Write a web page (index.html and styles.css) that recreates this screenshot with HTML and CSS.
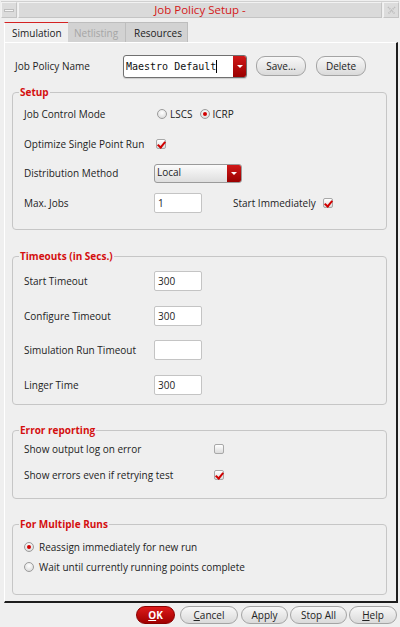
FILE: index.html
```html
<!DOCTYPE html>
<html>
<head>
<meta charset="utf-8">
<link rel="stylesheet" href="styles.css">
</head>
<body>
<div class="window">
  <div class="titlebar">
    <div class="tb-btn tb-min"><span class="min-bar"></span></div>
    <div class="tb-title">Job Policy Setup -</div>
    <div class="tb-btn tb-close">
      <svg width="9" height="9" viewBox="0 0 9 9"><path d="M1 1l7 7M8 1L1 8" stroke="#bdbdbd" stroke-width="1.6" stroke-dasharray="1.2 0.8"/></svg>
    </div>
  </div>

  <div class="tabs">
    <div class="tab active">Simulation</div>
    <div class="tab disabled">Netlisting</div>
    <div class="tab">Resources</div>
  </div>

  <div class="panel">
    <div class="name-row">
      <span class="lbl name-lbl">Job Policy Name</span>
      <div class="combo">
        <span class="combo-text">Maestro Default<span class="caret"></span></span>
        <span class="combo-arrow"><span class="tri"></span></span>
      </div>
      <button class="btn save">Save...</button>
      <button class="btn del">Delete</button>
    </div>

    <fieldset class="group setup">
      <legend>Setup</legend>
      <div class="grid">
        <span class="lbl">Job Control Mode</span>
        <div class="ctrl radios">
          <span class="radio"></span><span class="rlbl">LSCS</span>
          <span class="radio on"></span><span class="rlbl">ICRP</span>
        </div>
        <span class="lbl">Optimize Single Point Run</span>
        <div class="ctrl"><span class="check on"></span></div>
        <span class="lbl">Distribution Method</span>
        <div class="ctrl">
          <div class="select"><span class="select-text">Local</span><span class="select-arrow"><span class="tri"></span></span></div>
        </div>
        <span class="lbl">Max. Jobs</span>
        <div class="ctrl">
          <span class="input">1</span>
          <span class="lbl start-lbl">Start Immediately</span>
          <span class="check on start-check"></span>
        </div>
      </div>
    </fieldset>

    <fieldset class="group timeouts">
      <legend>Timeouts (in Secs.)</legend>
      <div class="grid tgrid">
        <span class="lbl">Start Timeout</span>
        <div class="ctrl"><span class="input">300</span></div>
        <span class="lbl">Configure Timeout</span>
        <div class="ctrl"><span class="input">300</span></div>
        <span class="lbl">Simulation Run Timeout</span>
        <div class="ctrl"><span class="input"></span></div>
        <span class="lbl">Linger Time</span>
        <div class="ctrl"><span class="input">300</span></div>
      </div>
    </fieldset>

    <fieldset class="group errors">
      <legend>Error reporting</legend>
      <div class="grid egrid">
        <span class="lbl">Show output log on error</span>
        <div class="ctrl"><span class="check"></span></div>
        <span class="lbl">Show errors even if retrying test</span>
        <div class="ctrl"><span class="check on"></span></div>
      </div>
    </fieldset>

    <fieldset class="group multi">
      <legend>For Multiple Runs</legend>
      <div class="mrow"><span class="radio on"></span><span class="lbl">Reassign immediately for new run</span></div>
      <div class="mrow"><span class="radio"></span><span class="lbl">Wait until currently running points complete</span></div>
    </fieldset>
  </div>

  <div class="footer">
    <button class="btn fbtn ok"><u>O</u>K</button>
    <button class="btn fbtn cancel"><u>C</u>ancel</button>
    <button class="btn fbtn apply">Apply</button>
    <button class="btn fbtn stop">Stop All</button>
    <button class="btn fbtn help"><u>H</u>elp</button>
  </div>
</div>
</body>
</html>
```

FILE: styles.css
```css
* { box-sizing: border-box; }
html, body {
  margin: 0;
  padding: 0;
  background: #efefef;
}
body {
  font-family: "Open Sans", "Noto Sans", sans-serif;
  font-size: 10px;
  color: #232323;
  width: 400px;
  height: 627px;
  overflow: hidden;
}
.window {
  width: 400px;
  height: 627px;
  display: flex;
  flex-direction: column;
  padding: 1px 1px 0 1px;
}
.titlebar {
  height: 17px;
  display: flex;
  gap: 1px;
  border-top: 1px solid #d0d0d0;
}
.tb-btn {
  width: 16px;
  height: 16px;
  background: #dcdcdc;
  border: 1px solid #c4c4c4;
  border-top-color: #f2f2f2;
  border-left-color: #f2f2f2;
  display: flex;
  align-items: center;
  justify-content: center;
}
.min-bar {
  width: 10px;
  height: 3px;
  background: #f6f6f6;
  border: 1px solid #bdbdbd;
}
.tb-title {
  flex: 1;
  background: #dadada;
  border: 1px solid #c4c4c4;
  border-top-color: #f2f2f2;
  border-left-color: #f2f2f2;
  color: #d41818;
  font-size: 11.5px;
  text-align: center;
  line-height: 14px;
}
.tabs {
  display: flex;
  margin-top: 4px;
  padding-left: 3px;
  height: 20px;
}
.tab {
  height: 20px;
  padding: 0 9px;
  background: #d2d2d2;
  border-top: 1px solid #bdbdbd;
  border-right: 1px solid #bdbdbd;
  line-height: 20px;
  color: #222;
}
.tab.active {
  background: #efefef;
  border-top: 1px solid #d42222;
  border-left: 1px solid #ffffff;
  border-right: none;
  width: 64px;
  padding: 0 0 0 7px;
}
.tab.disabled {
  color: #a6a6a6;
  width: 58px;
  padding-left: 6px;
}
.tab:last-child { width: 62px; padding-left: 8px; }

.panel {
  width: 394px;
  height: 561px;
  margin-left: 3px;
  border-left: 1px solid #ffffff;
  border-top: 1px solid #ffffff;
  border-right: 2px solid #1e1e1e;
  border-bottom: 2px solid #1e1e1e;
  padding: 11px 9px 0 6px;
  display: flex;
  flex-direction: column;
}
.name-row {
  display: flex;
  align-items: center;
  height: 24px;
}
.name-lbl {
  width: 112px;
  padding-left: 4px;
}
.combo {
  width: 124px;
  height: 23px;
  display: flex;
  border: 1px solid #707070;
  border-radius: 3px;
  background: #fff;
  overflow: hidden;
  box-shadow: 0 1px 1px rgba(0,0,0,0.15);
}
.combo-text {
  flex: 1;
  font-family: "DejaVu Sans Mono", monospace;
  font-size: 10px;
  line-height: 21px;
  padding-left: 2px;
  color: #111;
}
.caret {
  display: inline-block;
  width: 1px;
  height: 13px;
  background: #000;
  vertical-align: -3px;
}
.combo-arrow {
  width: 13px;
  background: linear-gradient(#d01818, #9a0000);
  display: flex;
  align-items: center;
  justify-content: center;
}
.tri {
  width: 0;
  height: 0;
  border-left: 3px solid transparent;
  border-right: 3px solid transparent;
  border-top: 3px solid #fff;
}
.btn {
  font-family: inherit;
  font-size: 10px;
  color: #222;
  height: 20px;
  border: 1px solid #a4a4a4;
  border-radius: 9px;
  background: linear-gradient(#f8f8f8, #dadada);
  padding: 0;
  margin: 0;
}
.save { width: 50px; margin-left: 9px; }
.del { width: 50px; margin-left: 10px; }

.group {
  margin: 0;
  border: 1px solid #c6c6c6;
  border-radius: 4px;
  padding: 0 10px 0 11px;
  min-width: 0;
}
.group legend {
  color: #d40f0f;
  font-weight: bold;
  font-size: 10px;
  padding: 0 1px;
  margin-left: -5px;
  line-height: 12px;
}
.setup {
  margin: 8px 0 0 1px;
  height: 144px;
  padding-top: 6px;
}
.grid {
  display: grid;
  grid-template-columns: 130px 1fr;
  grid-auto-rows: 20px;
  row-gap: 10px;
  align-items: center;
}
.setup .grid { row-gap: 9.5px; }
.lbl { white-space: nowrap; }
.ctrl {
  display: flex;
  align-items: center;
  height: 20px;
}
.radios { gap: 3px; padding-left: 3px; }
.radios .rlbl { margin-right: 4px; }
.radio {
  width: 10px;
  height: 10px;
  border-radius: 50%;
  border: 1px solid #9b9b9b;
  background: radial-gradient(circle at 50% 35%, #ffffff, #d4d4d4);
  display: inline-flex;
  align-items: center;
  justify-content: center;
  flex: none;
}
.radio.on::after {
  content: "";
  width: 4px;
  height: 4px;
  border-radius: 50%;
  background: #d00000;
}
.check {
  width: 10px;
  height: 10px;
  border: 1px solid #a8a8a8;
  border-radius: 2px;
  background: linear-gradient(#ffffff, #dcdcdc);
  position: relative;
  flex: none;
  margin-left: 2px;
}
.check.on::after {
  content: "";
  position: absolute;
  left: 2px;
  top: 0px;
  width: 3px;
  height: 6px;
  border-right: 2px solid #d00000;
  border-bottom: 2px solid #d00000;
  transform: rotate(40deg);
}
.select {
  width: 88px;
  height: 19px;
  display: flex;
  border: 1px solid #9a9a9a;
  border-radius: 3px;
  overflow: hidden;
  background: linear-gradient(#fbfbfb, #dedede);
}
.select-text { flex: 1; padding-left: 2px; line-height: 15px; }
.select-arrow {
  width: 14px;
  background: linear-gradient(#d01818, #9a0000);
  display: flex;
  align-items: center;
  justify-content: center;
}
.input {
  width: 48px;
  height: 20px;
  background: #fff;
  border: 1px solid #c4c4c4;
  border-radius: 2px;
  padding-left: 3px;
  line-height: 18px;
}
.start-lbl { margin-left: 31px; }
.start-check { margin-left: 7px; }
.timeouts {
  margin: 20px 0 0 1px;
  height: 155px;
  padding-top: 9px;
}
.tgrid { row-gap: 14.7px; grid-auto-rows: 20px; }
.errors {
  margin: 19px 0 0 1px;
  height: 75px;
  padding-top: 3px;
}
.egrid {
  grid-template-columns: 188px 1fr;
  row-gap: 6px;
}
.multi {
  margin: 19px 0 0 1px;
  height: 77px;
  padding-top: 7px;
}
.mrow {
  display: flex;
  align-items: center;
  gap: 5px;
  height: 20px;
}
.footer {
  display: flex;
  justify-content: flex-end;
  padding: 3px 2px 0 0;
}
.fbtn { height: 18px; border-radius: 9px; }
.fbtn u { text-decoration: underline; }
.ok {
  width: 39px;
  background: linear-gradient(#dd1a1a, #a00000);
  border-color: #8a0000;
  color: #fff;
  font-weight: bold;
}
.cancel { width: 58px; margin-left: 5px; }
.apply { width: 47px; margin-left: 3px; }
.stop { width: 57px; margin-left: 2px; }
.help { width: 48px; margin-left: 2px; }
```
